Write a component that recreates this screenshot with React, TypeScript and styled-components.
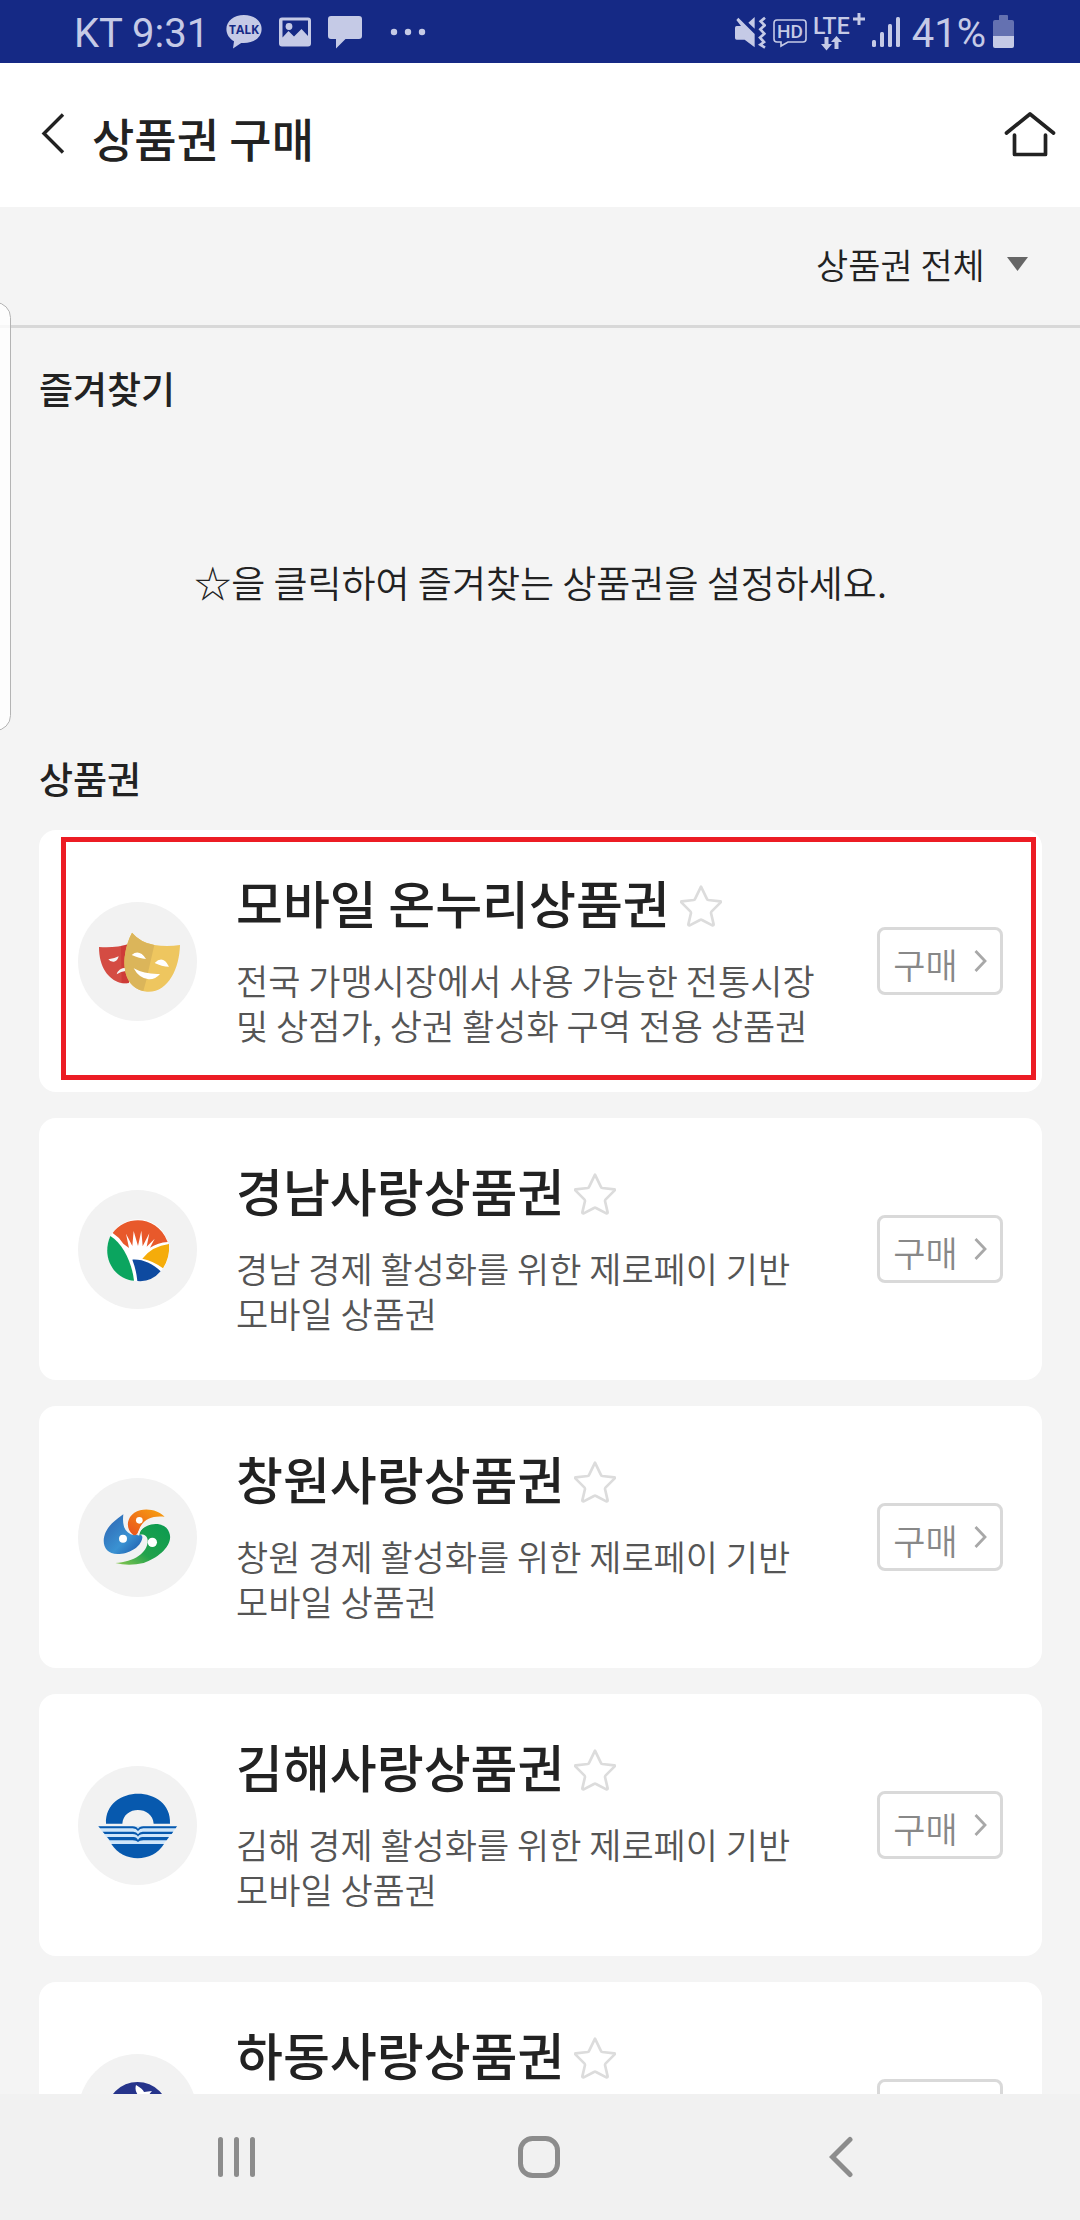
import React, { useState } from "react";
import styled, { createGlobalStyle } from "styled-components";

const GlobalStyle = createGlobalStyle`
  * { box-sizing: border-box; }
  body {
    margin: 0;
    background: #f4f4f4;
    color: #222;
    font-family: "Noto Sans CJK KR", "Noto Sans", sans-serif;
    font-weight: 350;
  }
  h1, h2, h3, p, ul { margin: 0; padding: 0; }
  button, select { font: inherit; color: inherit; background: none; border: 0; padding: 0; cursor: pointer; }
  svg { display: block; flex: none; }
`;

const Screen = styled.div`
  position: relative;
  display: flex;
  flex-direction: column;
  height: 100vh;
  overflow: hidden;
`;

const StatusBar = styled.div`
  flex: none;
  display: flex;
  justify-content: space-between;
  height: 63px;
  padding: 0 66px 0 74px;
  background: #152985;
  color: #c5cae6;
`;

const StatusGroup = styled.div<{ $gap: number }>`
  display: flex;
  align-items: center;
  gap: ${(p) => p.$gap}px;
`;

const StatusText = styled.span`
  padding-top: 4px;
  font: 400 40px/60px Roboto, sans-serif;
`;

const Header = styled.header`
  flex: none;
  display: flex;
  align-items: center;
  height: 144px;
  padding: 0 24px 0 40px;
  background: #fff;
`;

const Title = styled.h1`
  flex: 1;
  padding: 4px 0 0 26px;
  font-size: 46px;
  line-height: 64px;
  font-weight: 500;
`;

const Scroller = styled.main`
  flex: 1;
  min-height: 0;
  overflow-y: auto;
  scrollbar-width: none;
`;

const FilterBar = styled.div`
  display: flex;
  justify-content: flex-end;
  height: 121px;
  padding: 0 52px 4px 40px;
  border-bottom: 3px solid #d8d8d8;
`;

const FilterLabel = styled.label`
  display: flex;
  align-items: center;
  gap: 22px;
`;

const FilterSelect = styled.select`
  appearance: none;
  font-size: 35px;
  line-height: 48px;
  outline: none;
`;

const Section = styled.section`
  padding: 32px 38px 0 39px;
`;

const SectionTitle = styled.h2`
  font-size: 37px;
  line-height: 56px;
  font-weight: 500;
`;

const EmptyMessage = styled.p`
  padding: 138px 0 140px;
  font-size: 37px;
  line-height: 56px;
  text-align: center;
`;

const CardList = styled.ul`
  display: grid;
  gap: 26px;
  padding: 24px 0 40px;
  list-style: none;
`;

const Card = styled.li`
  position: relative;
  display: flex;
  align-items: center;
  height: 262px;
  padding: 0 39px;
  border-radius: 17px;
  background: #fff;
`;

const Highlight = styled.span`
  position: absolute;
  inset: 7px 6px 12px 22px;
  border: 5px solid #ec1c24;
  pointer-events: none;
`;

const Emblem = styled.span`
  flex: none;
  width: 119px;
  height: 119px;
  border-radius: 50%;
  background: #f2f2f2;
  overflow: hidden;
`;

const CardBody = styled.div`
  flex: 1;
  min-width: 0;
  padding: 0 40px 10px 39px;
`;

const NameRow = styled.div`
  display: flex;
  align-items: center;
  gap: 10px;
`;

const Name = styled.h3`
  font-size: 51px;
  line-height: 72px;
  font-weight: 500;
`;

const StarButton = styled.button`
  padding-top: 8px;
`;

const Description = styled.p`
  padding-top: 19px;
  color: #555;
  font-size: 35px;
  line-height: 45px;
  word-break: keep-all;
`;

const BuyButton = styled.button`
  flex: none;
  display: flex;
  align-items: center;
  justify-content: center;
  gap: 16px;
  width: 126px;
  height: 68px;
  border: 3px solid #d9d9d9;
  border-radius: 8px;
  color: #888;
  font-size: 35px;
  line-height: 48px;
`;

const BuyLabel = styled.span`
  padding-top: 6px;
`;

const EdgePanel = styled.div`
  position: absolute;
  left: -20px;
  top: 302px;
  width: 31px;
  height: 429px;
  border: 1px solid #b4b4b4;
  border-radius: 16px;
  background: rgba(255, 255, 255, 0.8);
`;

const NavBar = styled.nav`
  flex: none;
  display: grid;
  grid-template-columns: repeat(3, 1fr);
  height: 126px;
  padding: 0 88px 0 86px;
  background: #f1f1f1;
`;

const NavButton = styled.button`
  display: grid;
  place-items: center;
`;

const TalkIcon = () => (
  <svg width="36" height="36" viewBox="0 0 36 36" fill="currentColor">
    <path d="M18 1C8 1 .4 7 .4 15c0 5.500 3 9.500 7.600 12.200L7 34.500l8.200-5.600c12 1 20.400-5 20.400-13.900C35.600 7 28 1 18 1z" />
    <text x="18" y="20" textAnchor="middle" fontFamily="Open Sans, sans-serif" fontWeight="700" fontSize="12" fill="#152985">TALK</text>
  </svg>
);

const PhotoIcon = () => (
  <svg width="32" height="30" viewBox="0 0 32 30">
    <path fill="currentColor" fillRule="evenodd" d="M3 .5h26a3 3 0 0 1 3 3v23a3 3 0 0 1-3 3H3a3 3 0 0 1-3-3v-23a3 3 0 0 1 3-3zM3.500 3.500v17l6-6.500 5.500 5.500 7.500-7.500 6.500 7V3.500z" />
    <circle cx="10" cy="9.500" r="3.400" fill="currentColor" />
  </svg>
);

const MessageIcon = () => (
  <svg width="34" height="36" viewBox="0 0 34 36" fill="currentColor">
    <path d="M3 2h28a3 3 0 0 1 3 3v17a3 3 0 0 1-3 3H17.500L8 34.500V25H3a3 3 0 0 1-3-3V5a3 3 0 0 1 3-3z" />
  </svg>
);

const DotsIcon = () => (
  <svg width="48" height="8" viewBox="2 0 48 8" fill="currentColor">
    <circle cx="17" cy="4" r="3.200" />
    <circle cx="31" cy="4" r="3.200" />
    <circle cx="45" cy="4" r="3.200" />
  </svg>
);

const VibrateIcon = () => (
  <svg width="31" height="34" viewBox="106 42 93 102">
    <path fill="currentColor" d="M106 80q0-5 5-5h13l-14-18 6-7 49 49v40l-30-23h-24q-5 0-5-5zM146 65l19-17v35z" />
    <path d="M196 50l-13 11 12 12-13 12 12 13-13 12 12 13-11 8 14 9" fill="none" stroke="currentColor" strokeWidth="8" />
  </svg>
);

const HdIcon = () => (
  <svg width="34" height="32" viewBox="0 0 34 32">
    <path d="M4 4h26a3 3 0 0 1 3 3v16a3 3 0 0 1-3 3H15l-7 4v-4H4a3 3 0 0 1-3-3V7a3 3 0 0 1 3-3z" fill="none" stroke="currentColor" strokeWidth="1.600" />
    <text x="17" y="22" textAnchor="middle" fontFamily="Roboto, sans-serif" fontWeight="500" fontSize="19" fill="currentColor">HD</text>
  </svg>
);

const LteIcon = () => (
  <svg width="51" height="40" viewBox="0 0 51 40" fill="currentColor">
    <text x="-1" y="22" fontFamily="Roboto, sans-serif" fontWeight="500" fontSize="23">LTE</text>
    <path d="M43.500 1h3v4.500H51v3h-4.500V13h-3V8.500H39v-3h4.500z" />
    <path d="M10.500 25h4v7H18l-5.500 6.500L7 32h3.500zM20.500 37h4v-7H28l-5.500-6L17 30h3.500z" />
  </svg>
);

const SignalIcon = () => (
  <svg width="33" height="32" viewBox="0 0 33 32" fill="currentColor">
    <rect x="0" y="24" width="4" height="7" rx="1.500" />
    <rect x="8" y="16" width="4" height="15" rx="1.500" />
    <rect x="16" y="8" width="4" height="23" rx="1.500" />
    <rect x="24" y="1" width="4" height="30" rx="1.500" />
  </svg>
);

const BatteryIcon = () => (
  <svg width="21" height="34" viewBox="3 0 21 34" fill="currentColor">
    <path opacity=".45" d="M10 0h7a1 1 0 0 1 1 1v4h4a2 2 0 0 1 2 2v14H3V7a2 2 0 0 1 2-2h4V1a1 1 0 0 1 1-1z" />
    <path d="M3 21h21v10a2 2 0 0 1-2 2H5a2 2 0 0 1-2-2z" />
  </svg>
);

const BackIcon = () => (
  <svg width="26" height="52" viewBox="0 0 26 52">
    <path d="M23 5.500L4 24.500l19 19" fill="none" stroke="#222" strokeWidth="3.400" />
  </svg>
);

const HomeIcon = () => (
  <svg width="52" height="56" viewBox="0 0 52 56" fill="none" stroke="#222" strokeWidth="3.700" strokeLinecap="round" strokeLinejoin="round">
    <path d="M2.500 26L26 7l23.500 19" />
    <path d="M10.500 28v19.500h31V28" />
  </svg>
);

const CaretIcon = () => (
  <svg width="21" height="14" viewBox="0 0 21 14">
    <path d="M0 0h21L10.500 14z" fill="#666" />
  </svg>
);

const StarIcon = ({ filled }: { filled: boolean }) => (
  <svg width="42" height="42" viewBox="0 0 126 126">
    <path
      d="M63 5l17 35q1 4 5 5l36 4q3 1 1 3L95 79q-2 2-2 5l8 34q0 4-4 3l-31-16q-3-2-6 0l-31 16q-4 1-4-3l8-34q0-3-2-5L4 52q-2-2 1-3l36-4q4-1 5-5z"
      fill={filled ? "#ffcb3d" : "none"}
      stroke={filled ? "#ffcb3d" : "#dcdcdc"}
      strokeWidth="8"
      strokeLinejoin="round"
    />
  </svg>
);

const ChevronIcon = () => (
  <svg width="13" height="24" viewBox="0 0 13 24">
    <path d="M1.500 2L11 12l-9.500 10" fill="none" stroke="#a8a8a8" strokeWidth="2.800" />
  </svg>
);

const MaskEmblem = () => (
  <svg width="119" height="119" viewBox="144 244 357 357">
    <path d="M207 379q48 4 90-9v116q-14 4-27 0c-34-10-63-45-63-107z" fill="#d44c43" />
    <path d="M273 376l24-6v117q-12 2-22-1z" fill="#c9302f" opacity=".55" />
    <path d="M235 416q16-1 31-9-3 14-14 16-12 1-17-7zM260 461q6-20 27-20v10q-14 1-27 10z" fill="#f4f4f4" />
    <path d="M306 336q26 30 67 37 38 6 77 0c-2 72-36 144-99 140-50-5-72-48-67-104q5-42 22-73z" fill="#eec65f" />
    <path d="M306 336q26 30 67 37l-17 74q-7 34-16 64c-44-10-61-52-56-102q5-42 22-73z" fill="#dbb55a" />
    <path d="M305 403q23-19 43 12-20-1-43-12zM374 427q25-25 43 11-22 0-43-11z" fill="#fff" />
    <path d="M311 443q34 19 79 17-14 17-34 16-29-3-45-33z" fill="#fff" />
  </svg>
);

const GyeongnamEmblem = () => (
  <svg width="119" height="119" viewBox="24 28 357 357">
    <circle cx="204" cy="209" r="93" fill="#fff" />
    <path d="M128 157c42-57 135-51 164 25l1 2q-29 2-53 17l14-27-24 24 8-40-20 39-4-47-10 46-13-45-4 45-19-37 9 43-17-13q-13-20-32-32z" fill="#e8592b" />
    <path d="M121 166c38 24 65 80 71 134-54-2-101-65-71-134z" fill="#0ba55f" />
    <path d="M297 190q3 40-18 73-28-22-62-29 30-38 80-44z" fill="#f5ac0a" />
    <path d="M187 237c32-2 62 13 85 35q-28 33-70 29-3-33-15-64z" fill="#0e4aa0" />
  </svg>
);

const ChangwonEmblem = () => (
  <svg width="119" height="119" viewBox="24 54 357 357">
    <defs>
      <linearGradient id="cwBlue" x1="0" y1="0" x2="1" y2="1">
        <stop offset="0" stopColor="#2d62b0" />
        <stop offset=".6" stopColor="#3a92d2" />
        <stop offset="1" stopColor="#1b55a8" />
      </linearGradient>
      <linearGradient id="cwOrange" x1="0" y1="1" x2="1" y2="0">
        <stop offset="0" stopColor="#e9501e" />
        <stop offset="1" stopColor="#f8a410" />
      </linearGradient>
      <linearGradient id="cwGreen" x1="1" y1="0" x2="0" y2="1">
        <stop offset="0" stopColor="#0a9a50" />
        <stop offset=".6" stopColor="#22a24c" />
        <stop offset="1" stopColor="#8cc850" />
      </linearGradient>
    </defs>
    <path d="M160 163c-3 27 0 48 22 60 14 6 36-6 35 10-4 29-42 49-74 49-54-1-54-63-10-98q14-12 27-21z" fill="url(#cwBlue)" />
    <path d="M189 224c-23-18-19-50 4-66 29-18 71-9 91 12-37-4-66 6-78 42-3 10-10 18-17 12z" fill="url(#cwOrange)" />
    <path d="M205 225c10-31 58-44 84-22 35 40-17 89-68 106q-45 11-85 0c57-3 98-31 97-68-1-16-15-21-28-16z" fill="url(#cwGreen)" />
    <path d="M205 226q3-20 20-30" fill="none" stroke="#f2f2f2" strokeWidth="5" />
    <circle cx="208" cy="181" r="10" fill="#fff" />
    <circle cx="159" cy="236" r="12" fill="#fff" />
    <circle cx="247" cy="247" r="14" fill="#fff" />
  </svg>
);

const GimhaeEmblem = () => (
  <svg width="119" height="119" viewBox="24 50 357 357">
    <path d="M84 230h238l-44 58H128z" fill="#cfe6fa" />
    <path d="M108 223c-5-120 198-120 192 0h-49c-3-54-90-56-94 0z" fill="#0759ae" />
    <path d="M124 284h158c-34 56-122 58-158 0z" fill="#0759ae" />
    <path d="M85 231h103q12 0 16 8 4-8 16-8h101l-4 6h-97q-11 0-16 8-5-8-16-8H90zM98 247h92q10 0 14 8 4-8 14-8h92l-5 7h-85q-12 0-16 8-4-8-16-8h-84zM111 263h80q9 0 13 9 4-9 13-9h80l-7 10h-70q-12 0-16 5-4-5-16-5h-69z" fill="#0759ae" />
  </svg>
);

const HadongEmblem = () => (
  <svg width="119" height="119" viewBox="0 0 119 119">
    <circle cx="59.500" cy="59" r="31" fill="#26348b" />
    <path d="M58 31q7 4 8 7l8-1q-5 5-6 14l-10 14q-2-14 4-22-6-5-4-12z" fill="#fff" />
    <path d="M30 66q29-13 59 0-8 24-30 24T30 66z" fill="#2f9d5b" />
  </svg>
);

type Voucher = {
  name: string;
  description: string[];
  emblem: React.ReactNode;
  highlighted?: boolean;
};

const vouchers: Voucher[] = [
  {
    name: "모바일 온누리상품권",
    description: ["전국 가맹시장에서 사용 가능한 전통시장", "및 상점가, 상권 활성화 구역 전용 상품권"],
    emblem: <MaskEmblem />,
    highlighted: true,
  },
  { name: "경남사랑상품권", description: ["경남 경제 활성화를 위한 제로페이 기반", "모바일 상품권"], emblem: <GyeongnamEmblem /> },
  { name: "창원사랑상품권", description: ["창원 경제 활성화를 위한 제로페이 기반", "모바일 상품권"], emblem: <ChangwonEmblem /> },
  { name: "김해사랑상품권", description: ["김해 경제 활성화를 위한 제로페이 기반", "모바일 상품권"], emblem: <GimhaeEmblem /> },
  { name: "하동사랑상품권", description: ["하동 경제 활성화를 위한 제로페이 기반", "모바일 상품권"], emblem: <HadongEmblem /> },
];

function VoucherCard({ voucher }: { voucher: Voucher }) {
  const [favorite, setFavorite] = useState(false);
  return (
    <Card>
      <Emblem>{voucher.emblem}</Emblem>
      <CardBody>
        <NameRow>
          <Name>{voucher.name}</Name>
          <StarButton aria-label="즐겨찾기" aria-pressed={favorite} onClick={() => setFavorite(!favorite)}>
            <StarIcon filled={favorite} />
          </StarButton>
        </NameRow>
        <Description>
          {voucher.description[0]}
          <br />
          {voucher.description[1]}
        </Description>
      </CardBody>
      <BuyButton>
        <BuyLabel>구매</BuyLabel>
        <ChevronIcon />
      </BuyButton>
      {voucher.highlighted && <Highlight />}
    </Card>
  );
}

export default function App() {
  return (
    <>
      <GlobalStyle />
      <Screen>
        <StatusBar>
          <StatusGroup $gap={17}>
            <StatusText>KT 9:31</StatusText>
            <TalkIcon />
            <PhotoIcon />
            <MessageIcon />
            <DotsIcon />
          </StatusGroup>
          <StatusGroup $gap={7}>
            <VibrateIcon />
            <HdIcon />
            <LteIcon />
            <SignalIcon />
            <StatusText>41%</StatusText>
            <BatteryIcon />
          </StatusGroup>
        </StatusBar>
        <Header>
          <button aria-label="뒤로">
            <BackIcon />
          </button>
          <Title>상품권 구매</Title>
          <button aria-label="홈">
            <HomeIcon />
          </button>
        </Header>
        <Scroller>
          <FilterBar>
            <FilterLabel>
              <FilterSelect aria-label="상품권 종류">
                <option>상품권 전체</option>
              </FilterSelect>
              <CaretIcon />
            </FilterLabel>
          </FilterBar>
          <Section>
            <SectionTitle>즐겨찾기</SectionTitle>
            <EmptyMessage>☆을 클릭하여 즐겨찾는 상품권을 설정하세요.</EmptyMessage>
            <SectionTitle>상품권</SectionTitle>
            <CardList>
              {vouchers.map((v) => (
                <VoucherCard key={v.name} voucher={v} />
              ))}
            </CardList>
          </Section>
        </Scroller>
        <NavBar>
          <NavButton aria-label="최근 앱">
            <svg width="38" height="42" viewBox="0 0 38 42" fill="#8c8c8c">
              <rect x="0" y="1" width="5" height="40" rx="2.500" />
              <rect x="16" y="1" width="5" height="40" rx="2.500" />
              <rect x="32" y="1" width="5" height="40" rx="2.500" />
            </svg>
          </NavButton>
          <NavButton aria-label="홈 화면">
            <svg width="42" height="42" viewBox="0 0 42 42">
              <rect x="2.500" y="2.500" width="37" height="37" rx="12" fill="none" stroke="#8c8c8c" strokeWidth="5" />
            </svg>
          </NavButton>
          <NavButton aria-label="이전">
            <svg width="24" height="42" viewBox="0 0 24 42">
              <path d="M21 3.500L3.500 21 21 38.500" fill="none" stroke="#8c8c8c" strokeWidth="5" strokeLinecap="round" />
            </svg>
          </NavButton>
        </NavBar>
        <EdgePanel />
      </Screen>
    </>
  );
}
